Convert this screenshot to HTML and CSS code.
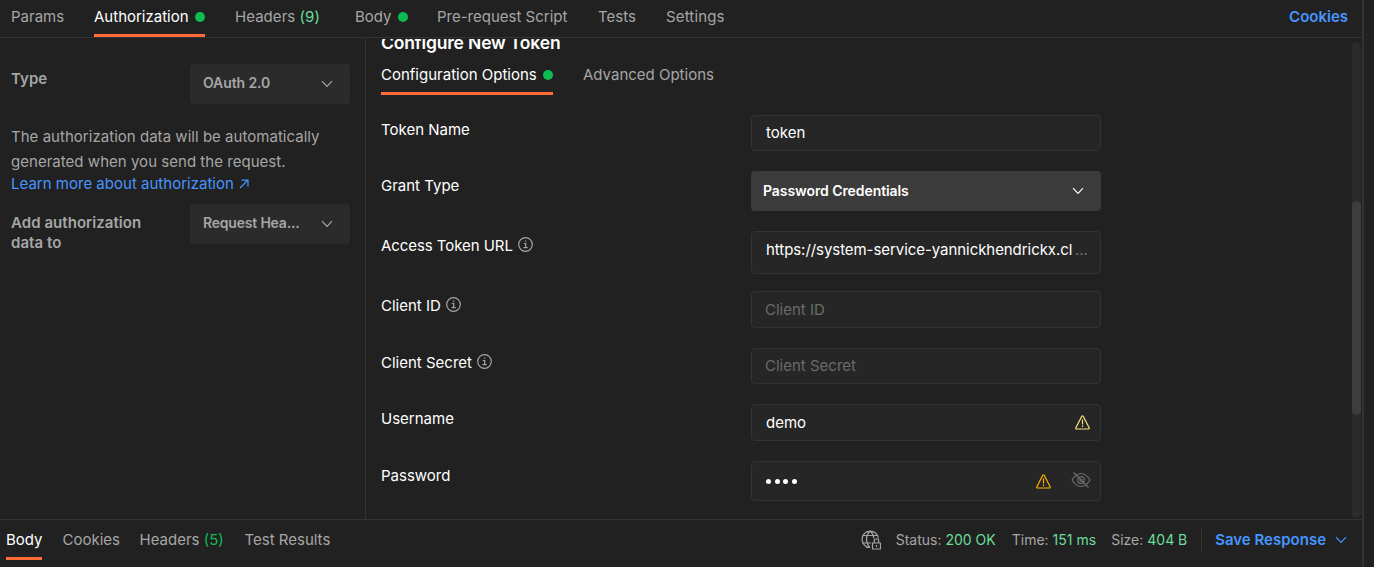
FILE: index.html
```html
<!DOCTYPE html>
<html lang="en">
<head>
<meta charset="utf-8">
<title>Request authorization</title>
<link rel="stylesheet" href="styles.css">
</head>
<body>
<svg class="defs" aria-hidden="true">
  <symbol id="chevron" viewBox="0 0 12 8"><path d="M1 1.200 6 6.300 11 1.200"/></symbol>
  <symbol id="info" viewBox="0 0 15 15"><circle cx="7.500" cy="7.500" r="6.800"/><path d="M5.800 6.500h1.900v4.200M5.500 10.700h4.200M7 4.200h1.200"/></symbol>
  <symbol id="warning" viewBox="0 0 15 15"><path d="M6.800 1.300 1 12.400Q.300 14 1.900 14h11.200q1.600 0 .900-1.600L8.200 1.300Q7.500.200 6.800 1.300ZM7.500 4.500v5M7.500 10.600v1.400"/></symbol>
</svg>
<div class="app">
  <nav class="tabs">
    <span class="tab params">Params</span>
    <span class="tab auth active">Authorization<i class="dot"></i></span>
    <span class="tab headers">Headers <b class="count">(9)</b></span>
    <span class="tab body">Body<i class="dot"></i></span>
    <span class="tab script">Pre-request Script</span>
    <span class="tab tests">Tests</span>
    <span class="tab settings">Settings</span>
    <a class="cookies">Cookies</a>
  </nav>
  <main class="content">
    <aside class="side">
      <div class="side-row">
        <div class="side-label">Type</div>
        <div class="select">OAuth 2.0<svg class="chevron"><use href="#chevron"/></svg></div>
      </div>
      <p class="note">The authorization data will be automatically<br>generated when you send the request.</p>
      <a class="learn">Learn more about authorization<svg class="arrow" viewBox="0 0 10 10"><path d="M1 9 8.500 1.500M2.500 1.200H9V7.500"/></svg></a>
      <div class="side-row">
        <div class="side-label">Add authorization<br>data to</div>
        <div class="select header">Request Hea...<svg class="chevron"><use href="#chevron"/></svg></div>
      </div>
    </aside>
    <section class="config">
      <h2 class="title">Configure New Token</h2>
      <div class="subtabs">
        <span class="subtab active">Configuration Options<i class="dot"></i></span>
        <span class="subtab">Advanced Options</span>
      </div>
      <div class="form">
        <div class="row"><label>Token Name</label><div class="field">token</div></div>
        <div class="row"><label>Grant Type</label><div class="field grant">Password Credentials<svg class="chevron"><use href="#chevron"/></svg></div></div>
        <div class="row url-row"><label>Access Token URL<svg class="info"><use href="#info"/></svg></label><div class="field url"><span class="url-text">https://system-service-yannickhendrickx.cl</span><span class="more">...</span></div></div>
        <div class="row"><label>Client ID<svg class="info"><use href="#info"/></svg></label><div class="field tall empty">Client ID</div></div>
        <div class="row"><label>Client Secret<svg class="info"><use href="#info"/></svg></label><div class="field empty">Client Secret</div></div>
        <div class="row"><label>Username</label><div class="field tall">demo<svg class="warning pale"><use href="#warning"/></svg></div></div>
        <div class="row"><label>Password</label><div class="field password"><span class="mask"><i></i><i></i><i></i><i></i></span><svg class="warning"><use href="#warning"/></svg><svg class="eye" viewBox="0 0 20 16"><path d="M1 8Q5 1.500 10 1.500T19 8Q15 14.500 10 14.500T1 8ZM2.500.500l15 15"/><circle cx="10" cy="8" r="3.300"/><circle cx="10" cy="8" r="1"/></svg></div></div>
      </div>
    </section>
    <div class="scrollbar"><div class="thumb"></div></div>
  </main>
  <footer class="response">
    <span class="rtab rbody active">Body</span>
    <span class="rtab rcookies">Cookies</span>
    <span class="rtab rheaders">Headers <b class="count">(5)</b></span>
    <span class="rtab">Test Results</span>
    <div class="status">
      <svg class="globe" viewBox="0 0 20 20"><path d="M9 17.500A8.200 8.200 0 1 1 17.400 8.500M9 17.500Q5.500 14 5.500 9.200T9.200 1Q12.500 4 12.900 8.500M2 5.500h14.500M2 13h8M5 17.500h4"/><path d="M11.500 13h8v6h-8zM13.300 13v-2.200q0-1.800 2.200-1.800t2.200 1.800V13M15.500 15v2"/></svg>
      <span class="stat s1">Status: <b>200 OK</b></span>
      <span class="stat s2">Time: <b>151 ms</b></span>
      <span class="stat s3">Size: <b>404 B</b></span>
      <a class="save">Save Response<svg class="chevron"><use href="#chevron"/></svg></a>
    </div>
  </footer>
</div>
</body>
</html>
```
FILE: styles.css
```css
* { box-sizing: border-box; }
body { margin: 0; background: #212121; color: #a6a6a6; font: 15px/20px Inter, sans-serif; overflow: hidden; }
svg { fill: none; stroke: currentColor; stroke-width: 1.2; flex: none; }
.defs { display: none; }
.app { width: 1364px; height: 567px; display: grid; grid-template-rows: 38px 481px 48px; border-right: 2px solid #333; }
.tabs { display: flex; padding-left: 11px; border-bottom: 1px solid #333; white-space: nowrap; }
.tab { height: 37px; padding-top: 7px; }
.params { width: 83px; }
.auth { width: 111px; margin-right: 30px; }
.headers { width: 120px; letter-spacing: .05px; }
.body { width: 82px; }
.script { width: 161px; }
.tests { width: 68px; }
.settings { letter-spacing: .15px; }
.auth.active, .subtab.active, .rtab.active { color: #fff; border-bottom: 3px solid #ff6c37; }
.auth, .body, .subtab { display: flex; justify-content: space-between; }
.body { justify-content: flex-start; gap: 6px; }
.dot { width: 10px; height: 10px; margin-top: 5px; border-radius: 50%; background: #0cbb52; }
.count, .stat b { font-weight: 400; color: #6bdd9a; }
.cookies { margin: 7px 14px 0 auto; color: #4795ff; font-weight: 600; }
.content { display: flex; overflow: hidden; }
.side { width: 366px; padding: 26px 15px 0 11px; border-right: 1px solid #333; }
.side-row { display: flex; justify-content: space-between; }
.side-label { font-weight: 600; padding-top: 5px; letter-spacing: .05px; }
.side-row + .note { margin: 20px 0 0; }
.learn + .side-row .side-label { padding-top: 9px; }
.select { display: flex; align-items: center; justify-content: space-between; width: 160px; height: 40px; padding: 0 17px 2px 13px; border-radius: 4px; background: #2b2b2b; font-size: 14px; font-weight: 600; letter-spacing: -.1px; }
.select.header { letter-spacing: -.2px; }
.chevron { width: 12px; height: 8px; }
.select .chevron { margin-top: 2px; }
.note { line-height: 25px; white-space: nowrap; letter-spacing: .03px; }
.learn { display: flex; align-items: center; gap: 5px; height: 20px; margin-bottom: 10px; color: #4795ff; letter-spacing: .01px; }
.arrow { width: 10px; height: 10px; }
.config { width: 735px; padding-left: 15px; color: #fff; margin-top: 1px; overflow: hidden; }
.title { margin: -6px 0 0; font-size: 17.5px; line-height: 20px; font-weight: 600; letter-spacing: -.17px; }
.subtabs { display: flex; gap: 30px; height: 42px; }
.subtab { padding-top: 12px; white-space: nowrap; color: #a6a6a6; }
.subtab.active { width: 172px; }
.form { display: grid; gap: 20px; padding-top: 20px; }
.row { display: grid; grid-template-columns: 370px 350px; }
.url-row { margin-bottom: -3px; letter-spacing: -.06px; }
label { display: flex; align-items: center; gap: 5px; height: 30px; }
.info { width: 15px; height: 15px; margin-top: -3px; color: #a6a6a6; }
.field { display: flex; align-items: center; height: 36px; padding: 0 10px 0 14px; border: 1px solid #333; border-radius: 4px; background: #262626; }
.field.tall { height: 37px; }
.field.grant { height: 40px; padding: 0 17px 0 12px; border: 0; background: #3b3b3b; font-size: 14px; font-weight: 600; justify-content: space-between; letter-spacing: -.08px; }
.field.url { height: 43px; padding-bottom: 5px; gap: 3px; }
.url-text { width: 306px; overflow: hidden; white-space: nowrap; }
.more { color: #6b6b6b; }
.field.empty { padding-left: 13px; color: #6b6b6b; }
.warning { width: 15px; height: 15px; margin-left: auto; color: #ffb400; }
.pale { color: #ffe47e; }
.field.password { height: 40px; padding-right: 9px; }
.mask { display: flex; gap: 3.5px; }
.mask i { width: 5px; height: 5px; border-radius: 50%; background: #fff; }
.eye { width: 20px; height: 16px; margin: -2px 0 0 20px; color: #6b6b6b; }
.scrollbar { width: 9px; height: 476px; margin: 4px 1px 0 auto; padding-top: 159px; border-radius: 5px; background: #2b2b2b; }
.thumb { height: 214px; border-radius: 5px; background: #3d3d3d; }
.response { display: flex; border-top: 1px solid #333; padding-left: 6px; white-space: nowrap; }
.rtab { height: 40px; padding-top: 10px; }
.rbody { width: 36px; margin-right: 20.5px; }
.rcookies { width: 77px; }
.rheaders { width: 105px; }
.rheaders .count { color: #0cbb52; }
.status { display: flex; align-items: center; height: 40px; margin-left: auto; padding-right: 15px; }
.globe { width: 20px; height: 20px; margin-right: 15px; }
.stat { font-size: 14px; margin-top: -1px; }
.s1 { width: 116px; }
.s2 { width: 99.5px; }
.s3 { width: 90px; }
.save { display: flex; align-items: center; height: 25px; padding-left: 13px; border-left: 1px solid #333; color: #4795ff; font-weight: 600; gap: 9px; }
```
